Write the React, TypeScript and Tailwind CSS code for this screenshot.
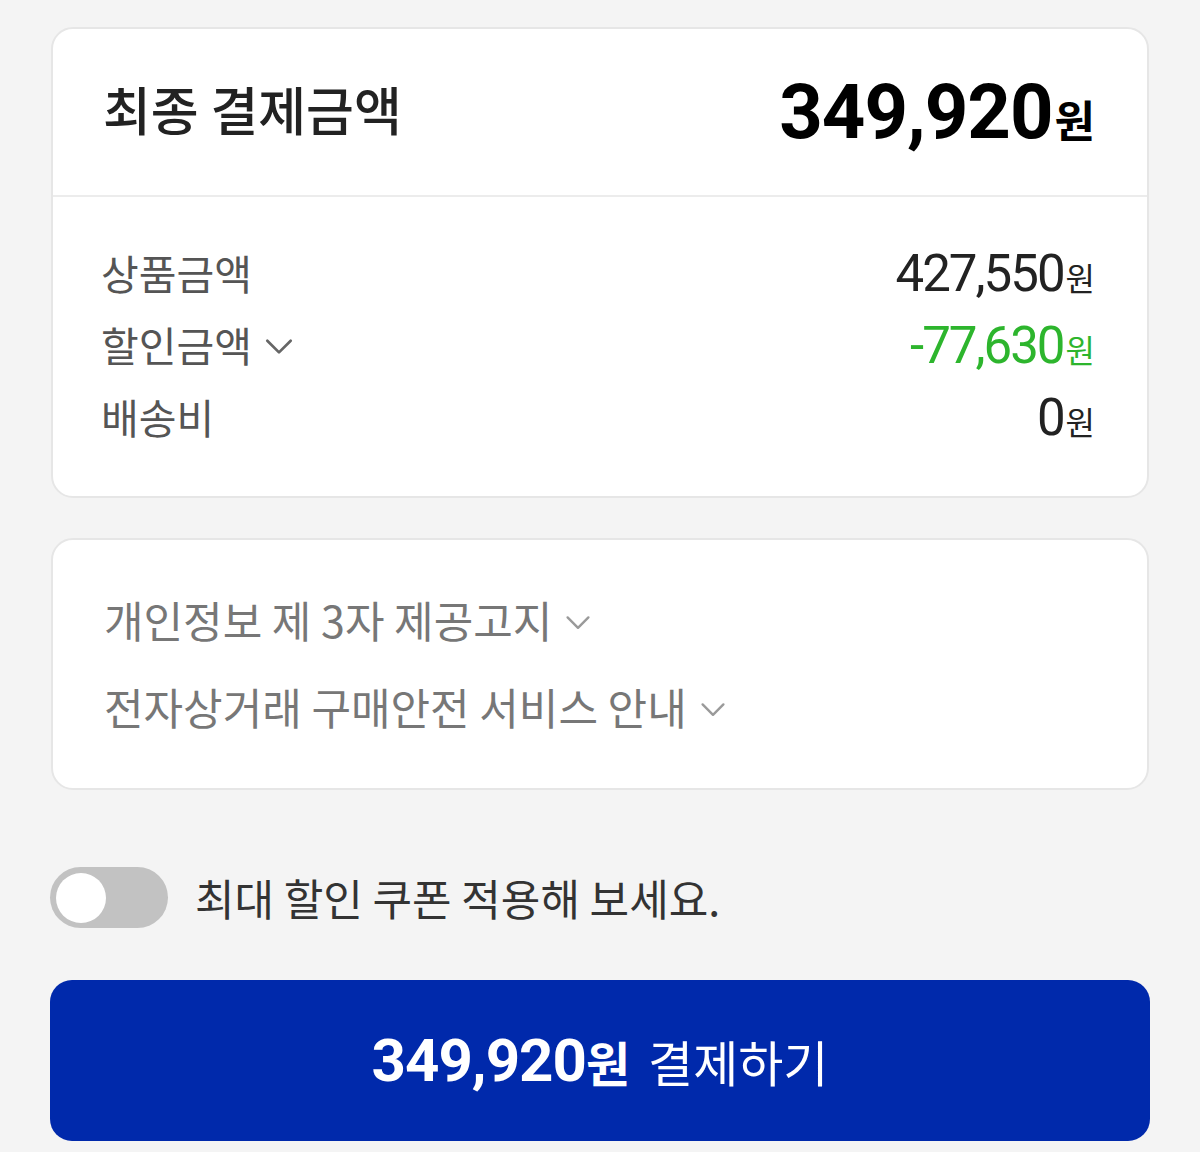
import React from "react";

const kr = "[font-family:'Noto_Sans_CJK_KR',sans-serif]";
const num = "[font-family:Roboto,'Noto_Sans_CJK_KR',sans-serif]";

const Chevron = ({ className }: { className?: string }) => (
  <svg viewBox="0 0 32 20" className={className} fill="none">
    <path d="M3 3l13 13L29 3" stroke="currentColor" strokeWidth="3" strokeLinecap="round" strokeLinejoin="round" />
  </svg>
);

const Won = ({ value, color }: { value: string; color: string }) => (
  <div className={`flex items-baseline ${color}`}>
    <span className={`${num} text-[51px] leading-none tracking-[-2px]`}>{value}</span>
    <span className={`${kr} text-[32px] leading-none ml-[2px]`}>원</span>
  </div>
);

const App = () => {
  return (
    <div className="min-h-[1152px] bg-[#f4f4f4] px-[50px] pt-[27px]">
      {/* final amount */}
      <div className="bg-white border-2 border-[#e6e6e6] rounded-[22px] mx-[1px]">
        <div className="h-[166px] flex items-center justify-between pl-[50px] pr-[52px]">
          <h1 className={`${kr} text-[52px] font-medium text-[#222] leading-none -mt-[6px]`}>최종 결제금액</h1>
          <div className="flex items-baseline text-black">
            <span className={`${num} text-[76px] font-bold leading-none tracking-[-1px]`}>349,920</span>
            <span className={`${kr} text-[44px] font-bold leading-none ml-[2px]`}>원</span>
          </div>
        </div>
        <div className="h-[2px] bg-[#ececec]" />
        <div className="pt-[40px] pb-[43px] pl-[48px] pr-[52px] flex flex-col">
          <div className="h-[72px] flex items-center justify-between">
            <span className={`${kr} text-[41px] text-[#555]`}>상품금액</span>
            <Won value="427,550" color="text-[#222]" />
          </div>
          <div className="h-[72px] flex items-center justify-between">
            <div className="flex items-center gap-[12px]">
              <span className={`${kr} text-[41px] text-[#555]`}>할인금액</span>
              <Chevron className="w-[30px] h-[18px] text-[#666] mt-[4px]" />
            </div>
            <Won value="-77,630" color="text-[#2db52d]" />
          </div>
          <div className="h-[72px] flex items-center justify-between">
            <span className={`${kr} text-[41px] text-[#555]`}>배송비</span>
            <Won value="0" color="text-[#222]" />
          </div>
        </div>
      </div>

      {/* notices */}
      <div className="mt-[40px] mx-[1px] bg-white border-2 border-[#e6e6e6] rounded-[22px] pt-[36px] pb-[38px] pl-[51px] flex flex-col">
        <div className="h-[87px] flex items-center gap-[12px]">
          <span className={`${kr} text-[43px] text-[#777]`}>개인정보 제 3자 제공고지</span>
          <Chevron className="w-[28px] h-[16px] text-[#9a9a9a] mt-[6px]" />
        </div>
        <div className="h-[87px] flex items-center gap-[12px]">
          <span className={`${kr} text-[43px] text-[#777]`}>전자상거래 구매안전 서비스 안내</span>
          <Chevron className="w-[28px] h-[16px] text-[#9a9a9a] mt-[6px]" />
        </div>
      </div>

      {/* coupon toggle */}
      <div className="mt-[77px] h-[61px] flex items-center gap-[27px]">
        <button className="w-[118px] h-[61px] rounded-full bg-[#c2c2c2] flex items-center pl-[6px]">
          <span className="w-[50px] h-[50px] rounded-full bg-white block" />
        </button>
        <span className={`${kr} text-[43px] leading-none text-[#333]`}>최대 할인 쿠폰 적용해 보세요.</span>
      </div>

      {/* pay button */}
      <button className="mt-[52px] w-full h-[161px] rounded-[22px] bg-[#0029ab] flex items-center justify-center text-white">
        <span className={`${num} text-[60px] font-bold leading-none tracking-[-1px]`}>349,920</span>
        <span className={`${kr} text-[48px] font-bold leading-none`}>원</span>
        <span className={`${kr} text-[49px] leading-none ml-[18px]`}>결제하기</span>
      </button>
    </div>
  );
};

export default App;
